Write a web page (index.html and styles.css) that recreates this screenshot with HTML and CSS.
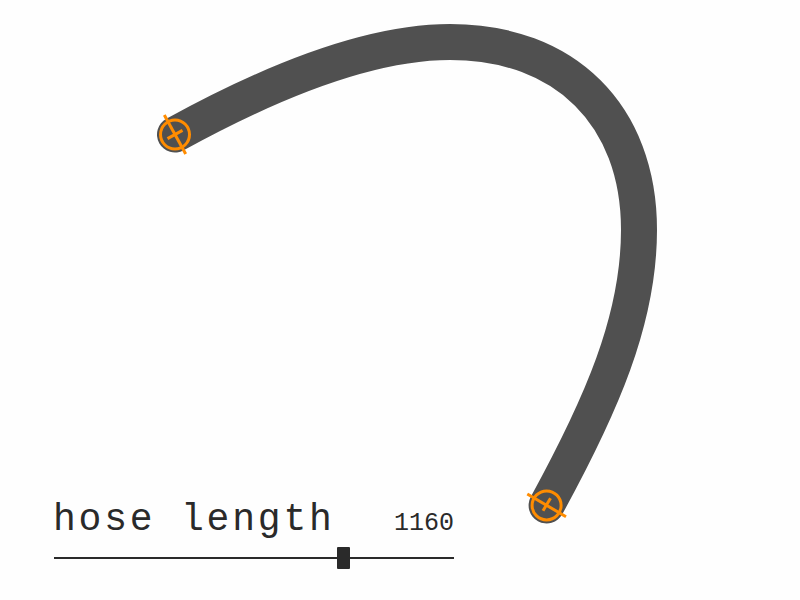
FILE: index.html
```html
<!DOCTYPE html>
<html lang="en">
<head>
<meta charset="utf-8">
<title>Hose</title>
<link rel="stylesheet" href="styles.css">
</head>
<body>
<main class="stage">
  <svg class="canvas" width="800" height="600" viewBox="0 0 800 600" xmlns="http://www.w3.org/2000/svg">
    <path class="hose" d="M175,134.5 C275,79.5 370,42 450,42 C565,42 639,115 639,230 C639,320 601,406 546.6,505.4"/>
    <g class="marker">
      <circle cx="175" cy="134.5" r="14.5"/>
      <line x1="164.3" y1="115" x2="185.7" y2="154"/>
      <line x1="167.5" y1="138.6" x2="182.5" y2="130.4"/>
    </g>
    <g class="marker">
      <circle cx="546.6" cy="505.4" r="14.5"/>
      <line x1="527.3" y1="494" x2="566" y2="516.7"/>
      <line x1="543" y1="510.7" x2="550.5" y2="498.3"/>
    </g>
  </svg>
  <div class="controls">
    <div class="row">
      <label class="label" for="len">hose length</label>
      <span class="value">1160</span>
    </div>
    <input class="slider" id="len" type="range" min="20" max="1580" value="1160">
  </div>
</main>
</body>
</html>
```
FILE: styles.css
```css
html, body {
  margin: 0;
  padding: 0;
  background: #fefefe;
}
.stage {
  display: grid;
  width: 800px;
  height: 600px;
  overflow: hidden;
}
.canvas {
  grid-area: 1 / 1;
  display: block;
}
.hose {
  fill: none;
  stroke: #505050;
  stroke-width: 36;
  stroke-linecap: round;
}
.marker circle {
  fill: none;
  stroke: #ff8c00;
  stroke-width: 3;
}
.marker line {
  stroke: #ff8c00;
  stroke-width: 3;
}
.controls {
  grid-area: 1 / 1;
  align-self: end;
  width: 400px;
  margin: 0 0 31px 54px;
  position: relative;
  font-family: "Liberation Mono", "DejaVu Sans Mono", monospace;
  color: #2a2a2a;
}
.row {
  display: flex;
  justify-content: space-between;
  align-items: baseline;
  line-height: 1;
}
.label {
  font-size: 38px;
  letter-spacing: 2.8px;
  margin-left: -1px;
}
.value {
  font-size: 25px;
}
.slider {
  -webkit-appearance: none;
  appearance: none;
  display: block;
  width: 400px;
  height: 22px;
  margin: 8px 0 0 0;
  padding: 0;
  background: transparent;
}
.slider::-webkit-slider-runnable-track {
  height: 2px;
  background: #2a2a2a;
  border: none;
}
.slider::-webkit-slider-thumb {
  -webkit-appearance: none;
  appearance: none;
  width: 13px;
  height: 22px;
  margin-top: -10px;
  background: #2a2a2a;
  border: none;
  border-radius: 1px;
}
```
